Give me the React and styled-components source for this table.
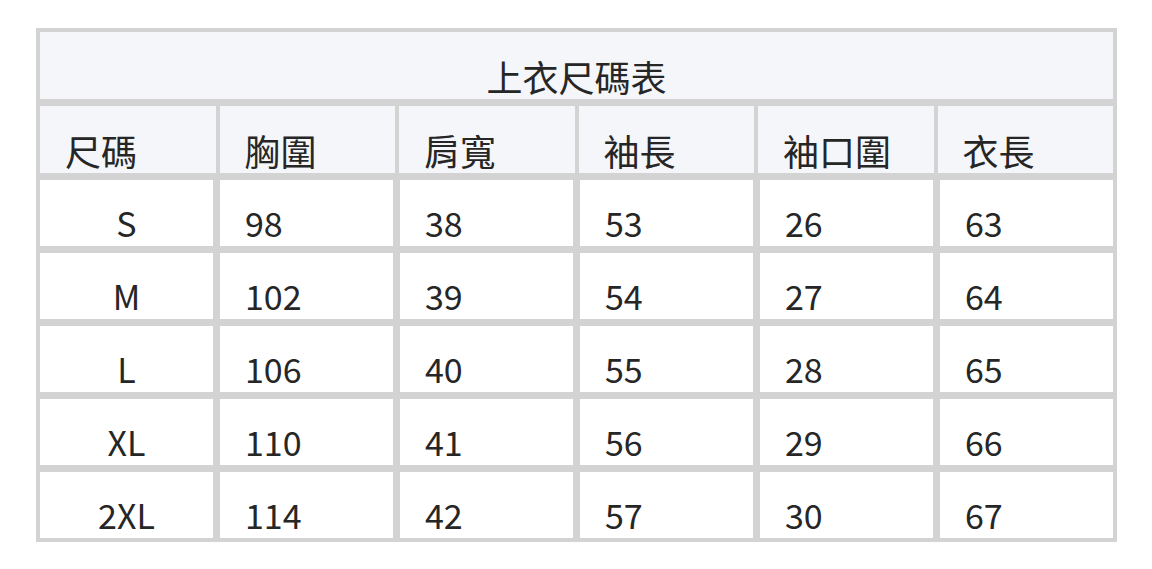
import React from "react";
import styled, { createGlobalStyle } from "styled-components";

const Global = createGlobalStyle`
  html, body { margin: 0; padding: 0; background: #ffffff; }
  body { font-family: "Noto Sans CJK TC", "Noto Sans", sans-serif; color: #262626; }
`;

const Page = styled.div`
  padding: 28px 35px 0 36px;
`;

const Table = styled.div`
  width: 1081px;
  box-sizing: border-box;
  background: #d3d3d3;
  padding: 4px;
  display: flex;
  flex-direction: column;
  gap: 7px;
`;

const TitleRow = styled.div`
  height: 67px;
  background: #f5f6fa;
  display: flex;
  align-items: center;
  justify-content: center;
  padding-top: 20px;
  box-sizing: border-box;
  font-size: 36px;
  line-height: 1;
`;

const Row = styled.div`
  display: grid;
  grid-template-columns: repeat(6, 1fr);
  gap: ${(p) => (p.$head ? "4px" : "7px")};
  height: ${(p) => (p.$head ? "67px" : "66px")};
`;

const Cell = styled.div`
  background: ${(p) => (p.$head ? "#f5f6fa" : "#ffffff")};
  display: flex;
  align-items: center;
  justify-content: ${(p) => (p.$center ? "center" : "flex-start")};
  padding: 20px 0 0 ${(p) => (p.$center ? "0" : "25px")};
  box-sizing: border-box;
  font-size: ${(p) => (p.$head ? "36px" : "34px")};
  line-height: 1;
  white-space: nowrap;
`;

const headers = ["尺碼", "胸圍", "肩寬", "袖長", "袖口圍", "衣長"];
const rows = [
  ["S", "98", "38", "53", "26", "63"],
  ["M", "102", "39", "54", "27", "64"],
  ["L", "106", "40", "55", "28", "65"],
  ["XL", "110", "41", "56", "29", "66"],
  ["2XL", "114", "42", "57", "30", "67"],
];

export default function App() {
  return (
    <Page>
      <Global />
      <Table>
        <TitleRow>上衣尺碼表</TitleRow>
        <Row $head>
          {headers.map((h) => (
            <Cell $head key={h}>{h}</Cell>
          ))}
        </Row>
        {rows.map((r) => (
          <Row key={r[0]}>
            {r.map((v, i) => (
              <Cell key={i} $center={i === 0}>{v}</Cell>
            ))}
          </Row>
        ))}
      </Table>
    </Page>
  );
}
